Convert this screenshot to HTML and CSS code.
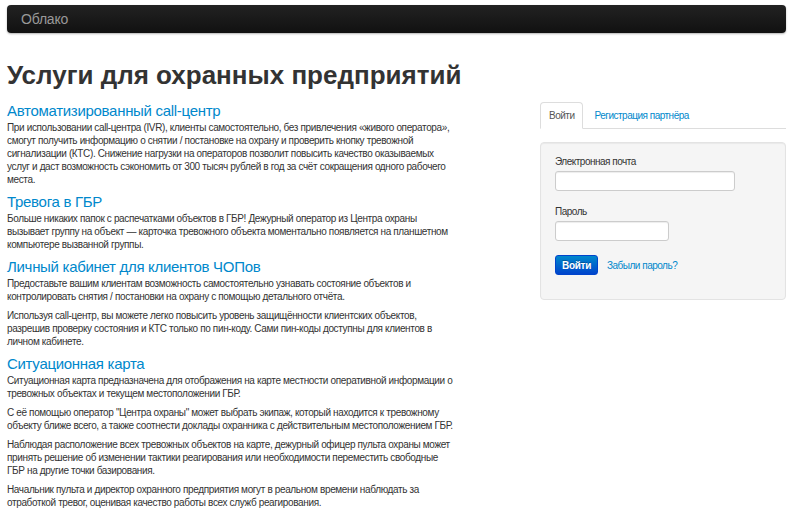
FILE: index.html
```html
<!DOCTYPE html>
<html lang="ru">
<head>
<meta charset="utf-8">
<title>Облако</title>
<link rel="stylesheet" href="styles.css">
</head>
<body>
<div class="navbar"><span class="brand">Облако</span></div>
<div class="page">
  <h1 class="title">Услуги для охранных предприятий</h1>
  <div class="row">
    <div class="main">
      <h3>Автоматизированный call-центр</h3>
      <p>При использовании call-центра (IVR), клиенты самостоятельно, без привлечения «живого оператора», смогут получить информацию о снятии / постановке на охрану и проверить кнопку тревожной сигнализации (КТС). Снижение нагрузки на операторов позволит повысить качество оказываемых услуг и даст возможность сэкономить от 300 тысяч рублей в год за счёт сокращения одного рабочего места.</p>
      <h3>Тревога в ГБР</h3>
      <p>Больше никаких папок с распечатками объектов в ГБР! Дежурный оператор из Центра охраны вызывает группу на объект — карточка тревожного объекта моментально появляется на планшетном компьютере вызванной группы.</p>
      <h3>Личный кабинет для клиентов ЧОПов</h3>
      <p>Предоставьте вашим клиентам возможность самостоятельно узнавать состояние объектов и контролировать снятия / постановки на охрану с помощью детального отчёта.</p>
      <p>Используя call-центр, вы можете легко повысить уровень защищённости клиентских объектов, разрешив проверку состояния и КТС только по пин-коду. Сами пин-коды доступны для клиентов в личном кабинете.</p>
      <h3>Ситуационная карта</h3>
      <p>Ситуационная карта предназначена для отображения на карте местности оперативной информации о тревожных объектах и текущем местоположении ГБР.</p>
      <p>С её помощью оператор "Центра охраны" может выбрать экипаж, который находится к тревожному объекту ближе всего, а также соотнести доклады охранника с действительным местоположением ГБР.</p>
      <p>Наблюдая расположение всех тревожных объектов на карте, дежурный офицер пульта охраны может принять решение об изменении тактики реагирования или необходимости переместить свободные ГБР на другие точки базирования.</p>
      <p>Начальник пульта и директор охранного предприятия могут в реальном времени наблюдать за отработкой тревог, оценивая качество работы всех служб реагирования.</p>
    </div>
    <div class="side">
      <ul class="tabs">
        <li class="tab active">Войти</li>
        <li class="tab"><a href="#">Регистрация партнёра</a></li>
      </ul>
      <form class="well">
        <label class="label">Электронная почта</label>
        <input class="input wide" type="text">
        <label class="label">Пароль</label>
        <input class="input short" type="password">
        <div class="actions">
          <button class="btn" type="button">Войти</button>
          <a class="forgot" href="#">Забыли пароль?</a>
        </div>
      </form>
    </div>
  </div>
</div>
</body>
</html>
```
FILE: styles.css
```css
* { box-sizing: border-box; }
html, body { margin: 0; padding: 0; }
body {
  font-family: "Liberation Sans", Arial, sans-serif;
  font-size: 10px;
  line-height: 13px;
  color: #333;
  background: #fff;
  padding: 5px 6px 0 7px;
}
.navbar {
  height: 28px;
  background: linear-gradient(#222, #111);
  border-radius: 4px;
  box-shadow: 0 1px 2px rgba(0,0,0,.3);
  display: flex;
  align-items: center;
  padding-left: 14px;
}
.brand {
  color: #999;
  font-size: 14px;
  letter-spacing: -0.2px;
}
.title {
  margin: 27px 0 0 0;
  font-size: 26px;
  line-height: 30px;
  font-weight: bold;
  color: #333;
}
.row {
  display: grid;
  grid-template-columns: 448px 246px;
  column-gap: 85px;
  margin-top: 11px;
}
.main {
  letter-spacing: -0.36px;
}
.main h3 {
  margin: 0;
  font-size: 15px;
  line-height: 20px;
  font-weight: normal;
  letter-spacing: -0.3px;
  color: #0088cc;
}
.main p {
  margin: 0 0 6px 0;
}
.main p + h3 { margin-top: 1px; }
.side {
  letter-spacing: -0.5px;
}
.tabs {
  list-style: none;
  margin: 1px 0 0 0;
  padding: 0;
  display: flex;
  border-bottom: 1px solid #ddd;
  height: 27px;
}
.tab {
  padding: 6px 8px 0 8px;
  margin-bottom: -1px;
  border: 1px solid transparent;
  border-radius: 4px 4px 0 0;
  margin-right: 2px;
  line-height: 14px;
}
.tab.active {
  border-color: #ddd #ddd transparent;
  background: #fff;
  color: #555;
}
.tab a { color: #0088cc; text-decoration: none; }
.well {
  margin-top: 13px;
  height: 158px;
  background: #f5f5f5;
  border: 1px solid #e3e3e3;
  border-radius: 4px;
  box-shadow: inset 0 1px 1px rgba(0,0,0,.05);
  padding: 12px 14px 0 14px;
  display: flex;
  flex-direction: column;
  align-items: flex-start;
}
.label {
  display: block;
  color: #333;
  line-height: 13px;
  margin-bottom: 3px;
}
.input {
  height: 20px;
  border: 1px solid #ccc;
  border-radius: 3px;
  background: #fff;
  box-shadow: inset 0 1px 1px rgba(0,0,0,.075);
  margin: 0 0 14px 0;
}
.wide { width: 180px; }
.short { width: 114px; }
.actions {
  display: flex;
  align-items: center;
  gap: 9px;
}
.btn {
  height: 20px;
  width: 43px;
  padding: 0;
  border: 1px solid #0044cc;
  border-radius: 3px;
  background: linear-gradient(#0088cc, #0044cc);
  color: #fff;
  font-family: inherit;
  font-size: 10px;
  font-weight: bold;
  letter-spacing: -0.3px;
  text-shadow: 0 -1px 0 rgba(0,0,0,.25);
}
.forgot { color: #0088cc; text-decoration: none; }
```
